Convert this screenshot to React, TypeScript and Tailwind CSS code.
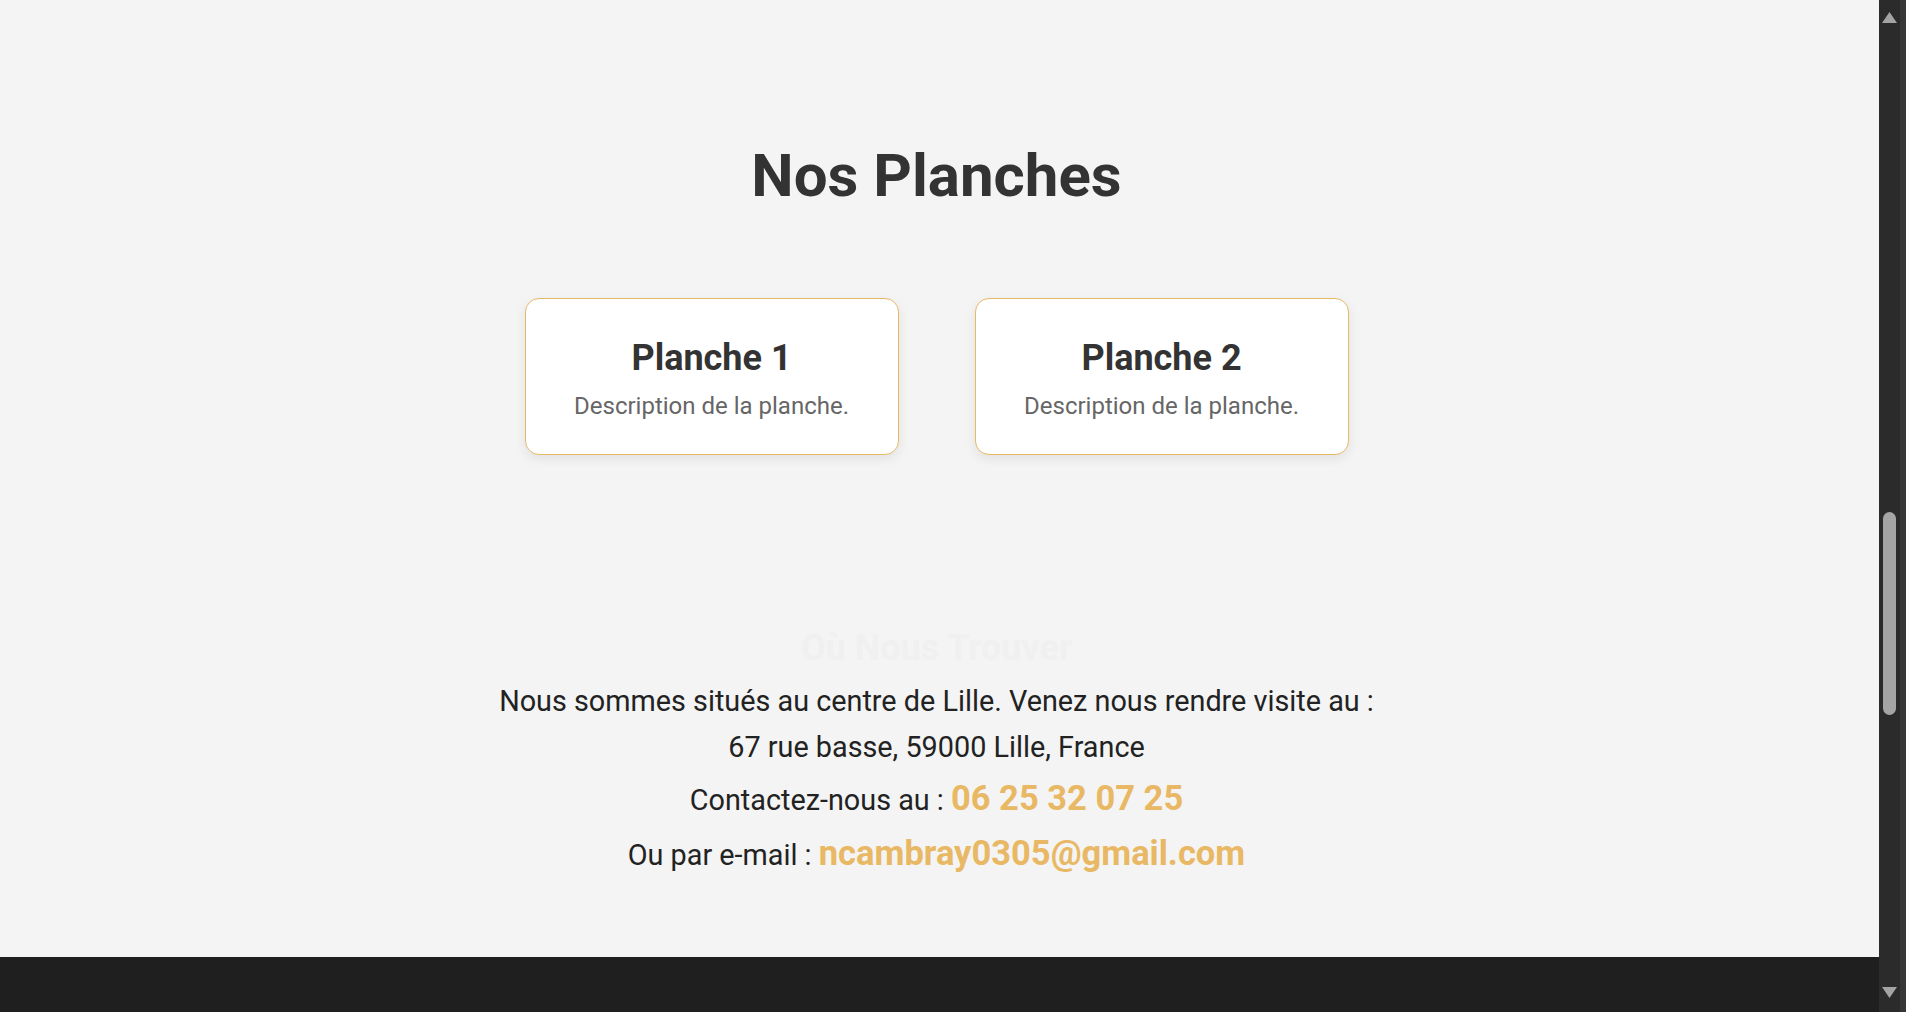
const planches = [
    { id: 1, title: "Planche 1", body: "Description de la planche." },
    { id: 2, title: "Planche 2", body: "Description de la planche." },
];

const PlancheCard = ({ title, body }: { title: string; body: string }) => {
    return (
        <div className="w-[374px] h-[157px] bg-white border border-[#e8b865] rounded-[14px] shadow-[0_4px_12px_rgba(0,0,0,0.08)] pt-[36px] pb-[33px] flex flex-col items-center">
            <h3 className="text-[36px] leading-[46px] font-bold text-[#333]">{title}</h3>
            <p className="mt-[10px] text-[24px] leading-[30px] text-[#666]">{body}</p>
        </div>
    );
};

const FakeScrollbar = () => {
    return (
        <div className="flex h-full">
            <div className="w-[21px] h-full bg-[#2b2b2b] flex flex-col items-center pt-[12px] pb-[14px]">
                <svg width="15" height="11" viewBox="0 0 15 11">
                    <polygon points="7.5,0 15,11 0,11" fill="#a3a3a3" />
                </svg>
                <div className="mt-[489px] w-[13px] h-[203px] rounded-full bg-[#a5a5a5]" />
                <div className="flex-1" />
                <svg width="15" height="11" viewBox="0 0 15 11">
                    <polygon points="0,0 15,0 7.5,11" fill="#a3a3a3" />
                </svg>
            </div>
            <div className="w-[6px] h-full bg-[#373737]" />
        </div>
    );
};

const App = () => {
    return (
        <div className="h-screen w-full flex overflow-hidden bg-[#f4f4f4] font-['Roboto',sans-serif]">
            <div className="flex-1 flex flex-col">
                <main className="flex-1 pr-[6px] flex flex-col items-center">
                    {/* Planches */}
                    <section className="pt-[140px] flex flex-col items-center">
                        <h2 className="text-[60px] leading-[72px] font-bold text-[#333]">Nos Planches</h2>
                        <div className="mt-[86px] flex gap-[76px]">
                            {planches.map(p => (
                                <PlancheCard key={p.id} title={p.title} body={p.body} />
                            ))}
                        </div>
                    </section>

                    {/* Contact */}
                    <section className="mt-[175px] flex flex-col items-center text-center text-[#222]">
                        <h2 className="text-[36px] leading-[36px] font-bold text-[#f0f0f0]">Où Nous Trouver</h2>
                        <p className="mt-[12px] text-[28.8px] leading-[46px]">
                            Nous sommes situés au centre de Lille. Venez nous rendre visite au :
                        </p>
                        <p className="text-[28.8px] leading-[46px]">67 rue basse, 59000 Lille, France</p>
                        <p className="mt-[5px] text-[28.8px] leading-[46px]">
                            Contactez-nous au : <span className="text-[34.5px] font-bold text-[#e8b865]">06 25 32 07 25</span>
                        </p>
                        <p className="mt-[7px] text-[28.8px] leading-[46px]">
                            Ou par e-mail : <span className="text-[34.5px] font-bold text-[#e8b865]">ncambray0305@gmail.com</span>
                        </p>
                    </section>
                </main>
                <footer className="h-[55px] bg-[#1f1f1f]" />
            </div>
            <FakeScrollbar />
        </div>
    );
};

export default App;
